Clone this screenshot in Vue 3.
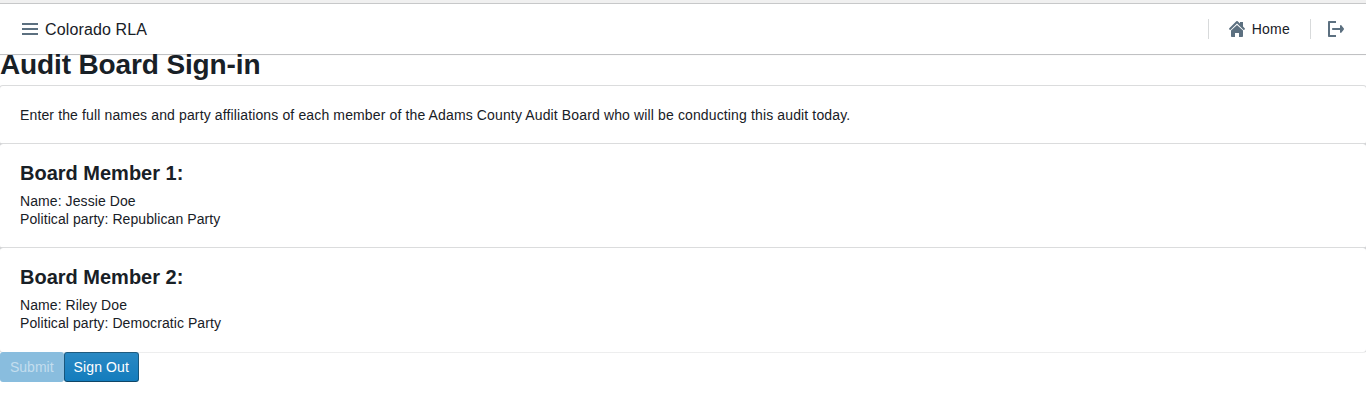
<script setup>
const members = [
  { name: 'Jessie Doe', party: 'Republican Party' },
  { name: 'Riley Doe', party: 'Democratic Party' },
]
</script>

<template>
  <div class="page">
    <div class="strip"></div>
    <nav class="navbar">
      <div class="group">
        <svg class="icon menu" width="16" height="16" viewBox="0 0 16 16">
          <path d="M0 2h16v2H0zM0 7h16v2H0zM0 12h16v2H0z" />
        </svg>
        <span class="brand">Colorado RLA</span>
      </div>
      <div class="group">
        <span class="divider"></span>
        <a class="home">
          <svg class="icon" width="16" height="16" viewBox="0 0 16 16">
            <path d="M2 9.500V15c0 .55.45 1 1 1h3v-4h4v4h3c.55 0 1-.45 1-1V9.500L8 4zM15.700 7.300 14 5.600V1H11v1.600L8.700.3a1 1 0 0 0-1.400 0l-7 7a1 1 0 0 0 1.400 1.400L8 2.600l6.300 6.100a1 1 0 0 0 1.400-1.400z" />
          </svg>
          <span>Home</span>
        </a>
        <span class="divider"></span>
        <a class="logout">
          <svg class="icon" width="16" height="16" viewBox="0 0 16 16">
            <path d="M8 2H2v12h6v2H1c-.55 0-1-.45-1-1V1c0-.55.45-1 1-1h7zM5 7h7V5c0-.9.900-1.200 1.500-.6l2.200 2.900c.4.400.4 1 0 1.400l-2.200 2.900c-.6.600-1.500.3-1.500-.6V9H5c-.55 0-1-.45-1-1s.45-1 1-1z" />
          </svg>
        </a>
      </div>
    </nav>
    <h2>Audit Board Sign-in</h2>
    <section class="card intro">
      Enter the full names and party affiliations of each member of the Adams County Audit Board who will be conducting this audit today.
    </section>
    <section v-for="(m, i) in members" :key="m.name" class="card">
      <h3>Board Member {{ i + 1 }}:</h3>
      <div>Name: {{ m.name }}</div>
      <div>Political party: {{ m.party }}</div>
    </section>
    <div class="actions">
      <button class="submit" disabled>Submit</button>
      <button class="signout">Sign Out</button>
    </div>
  </div>
</template>

<style>
body {
  background: #fff;
}
</style>

<style scoped>
.page {
  height: 404px;
  overflow: hidden;
  font: 14px/18px "Liberation Sans", Arial, sans-serif;
  letter-spacing: 0.08px;
  color: #182026;
}
.strip {
  height: 4px;
  background: #f0f0f0;
}
.navbar {
  position: relative;
  z-index: 10;
  display: flex;
  justify-content: space-between;
  height: 50px;
  padding: 0 15px;
  box-sizing: border-box;
  background: #fff;
  box-shadow: 0 0 0 1px rgba(16, 22, 26, 0.18), 0 1px 1px rgba(16, 22, 26, 0.1);
}
.group {
  display: flex;
  align-items: center;
}
.icon {
  display: block;
  fill: #5c7080;
}
.menu {
  margin: 0 7px;
}
.brand {
  padding-top: 2px;
  font-size: 16px;
  letter-spacing: 0.13px;
}
.divider {
  width: 1px;
  height: 20px;
  background: #d8dadb;
}
.home {
  display: flex;
  align-items: center;
  gap: 7px;
  padding: 0 20px;
  letter-spacing: 0.25px;
}
.logout {
  padding: 0 7px 0 17px;
}
h2 {
  margin: 0;
  padding-bottom: 10px;
  font-size: 28px;
  line-height: 22px;
  letter-spacing: -0.13px;
}
h3 {
  margin: 0 0 10px;
  font-size: 20px;
  line-height: 18px;
  letter-spacing: 0;
}
.card {
  padding: 20px;
  border-radius: 3px;
  background: #fff;
  box-shadow: 0 0 0 1px rgba(16, 22, 26, 0.15);
}
.intro {
  letter-spacing: 0.134px;
}
.actions {
  position: relative;
  display: flex;
  background: linear-gradient(rgba(255, 255, 255, 0.5) 1px, transparent 1px);
}
button {
  height: 30px;
  padding: 0 10px;
  border: 0;
  border-radius: 3px;
  font: inherit;
  line-height: 30px;
  letter-spacing: 0;
  color: #fff;
  background: #137cbd linear-gradient(to bottom, rgba(255, 255, 255, 0.1), rgba(255, 255, 255, 0));
  box-shadow: inset 0 0 0 1px rgba(16, 22, 26, 0.4), inset 0 -1px 0 rgba(16, 22, 26, 0.2);
}
.submit {
  color: rgba(255, 255, 255, 0.5);
  background: #89bdde;
  box-shadow: none;
}
.signout {
  letter-spacing: 0.12px;
}
</style>
